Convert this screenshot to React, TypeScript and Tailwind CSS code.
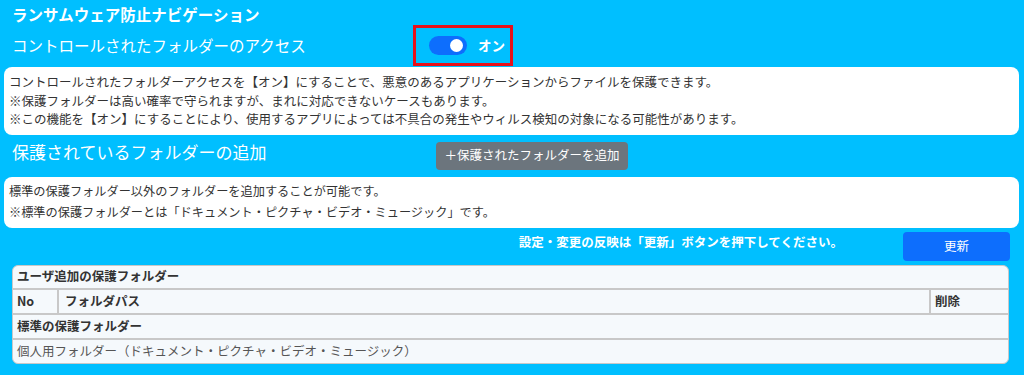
export default function App() {
  return (
    <div className="w-[1024px] h-[375px] overflow-hidden bg-[#00bfff] font-['Noto_Sans_CJK_JP',sans-serif]">
      <div className="h-[24px] pl-3 pt-[4px] text-[15.5px] font-bold leading-[20px] text-white">
        ランサムウェア防止ナビゲーション
      </div>

      <div className="flex h-[42px] items-center pl-3">
        <div className="w-[401px] text-[15.5px] leading-[20px] text-white">
          コントロールされたフォルダーのアクセス
        </div>
        <div className="flex h-[41px] w-[100px] items-center border-[3px] border-[#e8101a] pl-[13px]">
          <div className="flex h-[19px] w-[38px] items-center justify-end rounded-full bg-[#0d6efd] pr-[4px]">
            <div className="h-[13px] w-[13px] rounded-full bg-white" />
          </div>
          <span className="ml-[11px] text-[13.5px] font-bold text-white">オン</span>
        </div>
      </div>

      <div className="mx-[4px] mt-[1px] w-[1015px] rounded-lg bg-white px-[5px] py-[6px] text-[12.5px] leading-[18.5px] text-[#333]">
        <p>コントロールされたフォルダーアクセスを【オン】にすることで、悪意のあるアプリケーションからファイルを保護できます。</p>
        <p>※保護フォルダーは高い確率で守られますが、まれに対応できないケースもあります。</p>
        <p>※この機能を【オン】にすることにより、使用するアプリによっては不具合の発生やウィルス検知の対象になる可能性があります。</p>
      </div>

      <div className="flex h-[42px] items-center pl-3">
        <div className="mb-[8px] w-[424px] text-[17px] leading-[20px] text-white">
          保護されているフォルダーの追加
        </div>
        <button className="flex h-[28px] w-[192px] items-center justify-center rounded bg-[#6c757d] text-[12.5px] text-white">
          ＋保護されたフォルダーを追加
        </button>
      </div>

      <div className="mx-[4px] w-[1015px] rounded-lg bg-white px-[5px] pb-[5px] pt-[4px] text-[12.2px] leading-[21px] text-[#333]">
        <p>標準の保護フォルダー以外のフォルダーを追加することが可能です。</p>
        <p>※標準の保護フォルダーとは「ドキュメント・ピクチャ・ビデオ・ミュージック」です。</p>
      </div>

      <div className="flex h-[37px] items-start justify-end gap-[60px] pr-[14px] pt-[4px]">
        <p className="mt-[1px] text-[12.5px] font-bold leading-[18px] text-white">
          設定・変更の反映は「更新」ボタンを押下してください。
        </p>
        <button className="flex h-[29px] w-[107px] items-center justify-center rounded bg-[#0d6efd] text-[12.5px] text-white">
          更新
        </button>
      </div>

      <div className="mx-[12px] w-[997px] overflow-hidden rounded-md border border-[#c8c8c8] bg-[#f5f9fc] text-[12.5px] text-[#333]">
        <div className="flex h-[24px] items-center border-b-2 border-[#c8c8c8] px-[4px] font-bold">
          ユーザ追加の保護フォルダー
        </div>
        <div className="flex h-[25px] border-b-2 border-[#c8c8c8] font-bold">
          <div className="flex w-[46px] items-center border-r-2 border-[#c8c8c8] px-[4px]">No</div>
          <div className="flex flex-1 items-center border-r-2 border-[#c8c8c8] px-[6px]">フォルダパス</div>
          <div className="flex w-[77px] items-center px-[4px]">削除</div>
        </div>
        <div className="flex h-[25px] items-center border-b-2 border-[#c8c8c8] px-[4px] font-bold">
          標準の保護フォルダー
        </div>
        <div className="flex h-[23px] items-center px-[4px] text-[#555]">
          個人用フォルダー（ドキュメント・ピクチャ・ビデオ・ミュージック）
        </div>
      </div>
    </div>
  );
}
